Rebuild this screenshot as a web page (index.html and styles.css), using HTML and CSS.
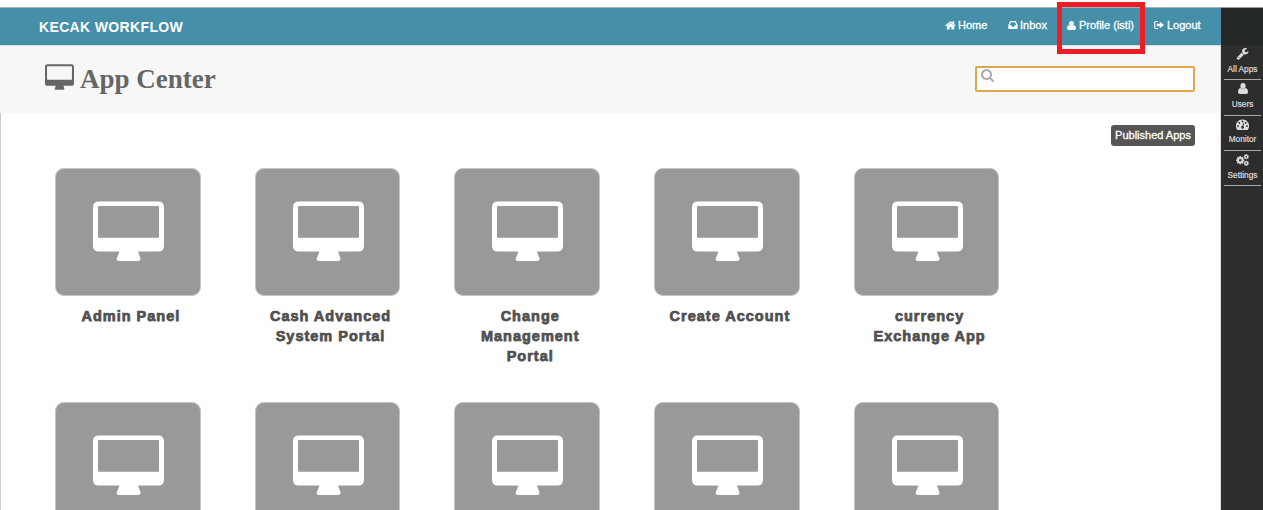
FILE: index.html
```html
<!DOCTYPE html>
<html lang="en">
<head>
<meta charset="utf-8">
<title>App Center</title>
<link rel="stylesheet" href="styles.css">
</head>
<body>
<svg class="defs" width="0" height="0">
  <symbol id="monitor" viewBox="0 0 71 61" preserveAspectRatio="none"><path fill-rule="evenodd" d="M6 0.500H65Q71 .5 71 6.500V45Q71 51 65 51H45L47.500 58Q48 60.500 45 60.500H26Q23 60.500 23.700 58L26.500 51H6Q0 51 0 45V6.500Q0 .5 6 .5ZM6 5Q5 5 5 6V36Q5 37 6 37H65Q66 37 66 36V6Q66 5 65 5Z"/></symbol>
  <symbol id="user" viewBox="0 0 20 22" preserveAspectRatio="none"><ellipse cx="10" cy="6" rx="5.300" ry="6"/><path d="M5 10Q10 15 15 10Q20 11 20 18Q20 22 16.500 22H3.500Q0 22 0 18Q0 11 5 10Z"/></symbol>
  <symbol id="gear" viewBox="-10 -10 20 20"><circle r="5.200" fill="none" stroke="currentColor" stroke-width="4.600"/><path fill="none" stroke="currentColor" stroke-width="4" d="M0-10V-6M0 6V10M-10 0H-6M6 0H10M-7-7L-5-5M5 5L7 7M-7 7L-5 5M5-5L7-7"/></symbol>
</svg>
<div class="page">
  <div class="main">
    <header class="topbar">
      <div class="brand">KECAK WORKFLOW</div>
      <nav class="nav">
        <a class="home"><svg viewBox="64 200 1664 1400"><path d="M1472 992v480q0 26-19 45t-45 19h-384v-384h-256v384h-384q-26 0-45-19t-19-45v-480q0-1 .5-3t.5-3l575-474 575 474q1 2 1 6zm223-69l-62 74q-8 9-21 11h-3q-13 0-21-7l-692-577-692 577q-12 8-24 7-13-2-21-11l-62-74q-8-10-7-23.500t11-21.500l719-599q32-26 76-26t76 26l244 204v-195q0-14 9-23t23-9h192q14 0 23 9t9 23v408l219 182q10 8 11 21.500t-7 23.500z"/></svg><span>Home</span></a>
        <a class="inbox"><svg viewBox="0 0 20 17"><path fill-rule="evenodd" d="M4 0H16L20 9V15.500Q20 17 18.500 17H1.500Q0 17 0 15.500V9ZM5.500 2.500L3 9H6.500L8 12H12L13.500 9H17L14.500 2.500Z"/></svg><span>Inbox</span></a>
        <a class="profile"><svg><use href="#user"/></svg><span>Profile (isti)</span></a>
        <a class="logout"><svg viewBox="0 0 22 18"><path d="M9 0V2.500H4.500Q2.500 2.500 2.500 4.500V13.500Q2.500 15.500 4.500 15.500H9V18H4Q0 18 0 14V4Q0 0 4 0ZM13 1.500L22 9L13 16.500V12H6V6H13Z"/></svg><span>Logout</span></a>
      </nav>
    </header>
    <section class="heading">
      <h1><svg><use href="#monitor"/></svg><span>App Center</span></h1>
      <div class="search"><svg viewBox="64 128 1664 1664"><path d="M1216 832q0-185-131.500-316.500t-316.500-131.500-316.500 131.500-131.500 316.500 131.500 316.500 316.500 131.500 316.500-131.500 131.500-316.500zm512 832q0 52-38 90t-90 38q-54 0-90-38l-343-342q-179 124-399 124-143 0-273.500-55.500t-225-150-150-225-55.500-273.500 55.500-273.500 150-225 225-150 273.500-55.500 273.500 55.500 225 150 150 225 55.500 273.500q0 220-124 399l343 343q37 37 37 90z"/></svg></div>
    </section>
    <section class="content">
      <div class="actions"><span class="badge">Published Apps</span></div>
      <div class="apps">
        <div class="app"><div class="tile"><svg><use href="#monitor"/></svg></div><p>Admin Panel</p></div>
        <div class="app"><div class="tile"><svg><use href="#monitor"/></svg></div><p>Cash Advanced<br>System Portal</p></div>
        <div class="app"><div class="tile"><svg><use href="#monitor"/></svg></div><p>Change<br>Management<br>Portal</p></div>
        <div class="app"><div class="tile"><svg><use href="#monitor"/></svg></div><p>Create Account</p></div>
        <div class="app"><div class="tile"><svg><use href="#monitor"/></svg></div><p>currency<br>Exchange App</p></div>
        <div class="app"><div class="tile"><svg><use href="#monitor"/></svg></div></div>
        <div class="app"><div class="tile"><svg><use href="#monitor"/></svg></div></div>
        <div class="app"><div class="tile"><svg><use href="#monitor"/></svg></div></div>
        <div class="app"><div class="tile"><svg><use href="#monitor"/></svg></div></div>
        <div class="app"><div class="tile"><svg><use href="#monitor"/></svg></div></div>
      </div>
    </section>
  </div>
  <aside class="side">
    <div class="cap"></div>
    <div class="tool"><svg viewBox="64 128 1664 1664"><path d="M448 1472q0-26-19-45t-45-19-45 19-19 45 19 45 45 19 45-19 19-45zm644-420l-682 682q-37 37-90 37-52 0-91-37l-106-108q-38-36-38-90 0-53 38-91l681-681q39 98 114.500 173.500t173.500 114.500zm634-435q0 39-23 106-47 134-164.500 217.500t-258.500 83.500q-185 0-316.500-131.500t-131.500-316.500 131.500-316.500 316.500-131.500q58 0 121.500 16.500t107.500 46.500q16 11 16 28t-16 28l-293 169v224l193 107q5-3 79-48.500t135.500-81 70.500-35.500q15 0 23.500 10t8.500 25z"/></svg><span>All Apps</span></div>
    <div class="tool users"><svg><use href="#user"/></svg><span>Users</span></div>
    <div class="tool monitor"><svg viewBox="0 0 26 22"><path fill-rule="evenodd" d="M13 1A13 13 0 0 1 24 21Q23.500 22 22.500 22H3.500Q2.500 22 2 21A13 13 0 0 1 13 1ZM4 12.500a1.700 1.700 0 1 0 .01 0ZM6.700 6a1.700 1.700 0 1 0 .01 0ZM13 3a1.700 1.700 0 1 0 .01 0ZM19.300 6a1.700 1.700 0 1 0 .01 0ZM22 12.500a1.700 1.700 0 1 0 .01 0ZM14.600 8L12.800 14A2.700 2.700 0 1 0 14.800 14.600L16.200 8.500Z"/></svg><span>Monitor</span></div>
    <div class="tool"><svg viewBox="0 0 26 24"><use href="#gear" x="0" y="4" width="17" height="17"/><use href="#gear" x="15" y="0" width="11" height="11"/><use href="#gear" x="15" y="13" width="11" height="11"/></svg><span>Settings</span></div>
  </aside>
  <div class="highlight"></div>
</div>
</body>
</html>
```
FILE: styles.css
```css
* { box-sizing: border-box; }
body { margin: 0; background: #fff; font-family: "Liberation Sans", Arial, sans-serif; overflow: hidden; }
svg { fill: currentColor; flex: none; }
.defs { position: absolute; }
.page { position: relative; display: flex; height: 510px; padding-top: 7px; overflow: hidden; }
.main { flex: 1; min-width: 0; border-right: 1px solid #ddd; }
.topbar { display: flex; justify-content: space-between; height: 39px; padding: 0 20px 0 39px; background: #4590a8; border-top: 1px solid #a3b0b4; border-bottom: 1px solid #d5dee1; color: #fff; margin-right: -1px; }
.brand { font-size: 14px; font-weight: bold; line-height: 38px; letter-spacing: .35px; }
.nav { display: flex; height: 34px; align-items: center; font-size: 11px; -webkit-text-stroke: .3px #fff; }
.nav a { display: flex; align-items: center; gap: 2px; white-space: nowrap; }
.nav .home { width: 63px; }
.nav .inbox { width: 59px; }
.nav .profile { width: 87px; gap: 3px; }
.nav .logout { width: 47px; gap: 3px; }
.nav .home svg { width: 11px; height: 9px; }
.nav .inbox svg { width: 10px; height: 8px; }
.nav .profile svg { width: 9px; height: 9px; }
.nav .logout svg { width: 10px; height: 8px; }
.heading { display: flex; justify-content: space-between; height: 67px; padding: 0 25px 0 45px; background: #f7f7f7; color: #666; }
h1 { display: flex; align-items: flex-start; gap: 6px; margin: 0; padding-top: 18px; font: bold 27px/31px "Liberation Serif", "Times New Roman", serif; }
h1 svg { width: 29px; height: 26px; }
.search { width: 220px; height: 26px; margin-top: 20px; padding: 1px 4px; background: #fff; border: 2px solid #dba94b; border-radius: 2px; color: #aaa; }
.search svg { display: block; width: 13px; height: 13px; }
.content { height: 397px; border-left: 1px solid #ccc; }
.actions { display: flex; justify-content: flex-end; height: 55px; padding: 12px 25px 0 0; }
.badge { height: 21px; width: 84px; border-radius: 3px; background: #555; color: #fff; font-size: 11px; line-height: 20px; text-align: center; white-space: nowrap; -webkit-text-stroke: .3px #fff; }
.apps { display: grid; grid-template-columns: repeat(5, 145.700px); grid-auto-rows: 234px; column-gap: 54px; padding-left: 54px; }
.tile { display: flex; justify-content: center; height: 128px; padding: 32px 0 0 1px; border: 1px solid #c4c4c4; border-radius: 9px; background: #999; color: #fff; }
.tile svg { width: 71px; height: 60.500px; }
.app p { margin: 10px -20px 0 -14px; text-align: center; color: #505050; font-size: 14.500px; font-weight: bold; line-height: 20px; letter-spacing: 1px; -webkit-text-stroke: .75px #505050; }
.side { width: 42px; background: #2d2d2d; color: #ddd; border-top: 1px solid #999; }
.cap { height: 37px; background: #242928; }
.tool { display: flex; flex-direction: column; align-items: center; height: 35.300px; margin: 0 2px 0 3px; padding-top: 3px; border-bottom: 1px solid #aaa; font-size: 8.300px; line-height: 10px; -webkit-text-stroke: .2px #ddd; }
.tool svg { width: 13px; height: 12px; margin-bottom: 4px; }
.tool.users svg { width: 10px; height: 11px; margin-bottom: 5px; }
.tool.monitor svg { width: 13px; height: 11px; margin-bottom: 4px; }
.tool span { white-space: nowrap; }
.highlight { position: absolute; left: 1057px; top: 2px; width: 88px; height: 52px; border: 5px solid #ee1c25; }
```
